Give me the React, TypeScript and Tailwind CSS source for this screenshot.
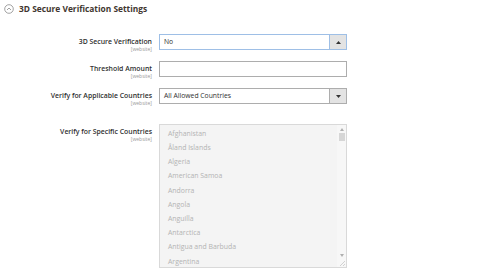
import React from 'react';

const countries = [
  'Afghanistan',
  'Åland Islands',
  'Algeria',
  'American Samoa',
  'Andorra',
  'Angola',
  'Anguilla',
  'Antarctica',
  'Antigua and Barbuda',
  'Argentina',
];

const Label = ({ text }: { text: string }) => (
  <div className="w-[153px] h-[18px] shrink-0 text-right pr-[1px] pt-[3px] leading-none">
    <div className="text-[6.9px] font-semibold text-[#303030] leading-[9px]">{text}</div>
    <div className="text-[5px] text-[#999] leading-[6px]">[website]</div>
  </div>
);

const SelectBox = ({ value, up, focused }: { value: string; up?: boolean; focused?: boolean }) => (
  <div
    className={`flex w-[188px] h-[16px] border bg-white ${focused ? 'border-[#9ebfe6]' : 'border-[#adadad]'}`}
  >
    <div className="flex-1 flex items-center pl-[4px] text-[6.8px] text-[#303030]">{value}</div>
    <div
      className={`w-[17px] flex items-center justify-center bg-[#e3e3e3] border-l ${focused ? 'border-[#9ebfe6]' : 'border-[#adadad]'}`}
    >
      <svg width="5" height="3" viewBox="0 0 5 3">
        {up ? <path d="M0 3 L2.5 0 L5 3 Z" fill="#333" /> : <path d="M0 0 L5 0 L2.5 3 Z" fill="#333" />}
      </svg>
    </div>
  </div>
);

export default function App() {
  return (
    <div className="w-[480px] h-[277px] bg-white overflow-hidden" style={{ fontFamily: '"Open Sans", sans-serif' }}>
      <div className="flex items-center gap-[5px] pl-[4px] pt-[4px] h-[14px]">
        <svg width="10" height="10" viewBox="0 0 10 10">
          <circle cx="5" cy="5" r="4.3" fill="none" stroke="#8a8a8a" strokeWidth="0.8" />
          <path d="M3 6 L5 4 L7 6" fill="none" stroke="#8a8a8a" strokeWidth="0.8" />
        </svg>
        <div className="text-[8.4px] font-bold text-[#41362f]">3D Secure Verification Settings</div>
      </div>

      <div className="flex flex-col mt-[20px]">
        <div className="flex gap-[6px] items-start">
          <Label text="3D Secure Verification" />
          <SelectBox value="No" up focused />
        </div>
        <div className="flex gap-[6px] items-start mt-[9px]">
          <Label text="Threshold Amount" />
          <div className="w-[188px] h-[16px] border border-[#adadad] bg-white" />
        </div>
        <div className="flex gap-[6px] items-start mt-[9px]">
          <Label text="Verify for Applicable Countries" />
          <SelectBox value="All Allowed Countries" />
        </div>
        <div className="flex gap-[6px] items-start mt-[18px]">
          <Label text="Verify for Specific Countries" />
          <div className="relative w-[188px] h-[144px] border border-[#d9d9d9] bg-[#f4f4f4] overflow-hidden">
            <div className="flex flex-col pt-[2px] pl-[8px]">
              {countries.map((c) => (
                <div key={c} className="h-[14.2px] flex items-center text-[6.9px] text-[#b3b3b3]">
                  {c}
                </div>
              ))}
            </div>
            <div className="absolute right-0 top-0 bottom-0 w-[9px] bg-[#f7f7f7] flex flex-col items-center">
              <svg width="4" height="3" viewBox="0 0 4 3" className="mt-[3px]">
                <path d="M0 3 L2 0 L4 3 Z" fill="#b0b0b0" />
              </svg>
              <div className="w-[6px] h-[8px] bg-[#d6d6d6] mt-[2px]" />
              <div className="flex-1" />
              <svg width="4" height="3" viewBox="0 0 4 3" className="mb-[10px]">
                <path d="M0 0 L4 0 L2 3 Z" fill="#b0b0b0" />
              </svg>
            </div>
            <svg width="6" height="6" viewBox="0 0 6 6" className="absolute right-[1px] bottom-[1px]">
              <path d="M1 6 L6 1 M4 6 L6 4" stroke="#c0c0c0" strokeWidth="0.7" />
            </svg>
          </div>
        </div>
      </div>
    </div>
  );
}
